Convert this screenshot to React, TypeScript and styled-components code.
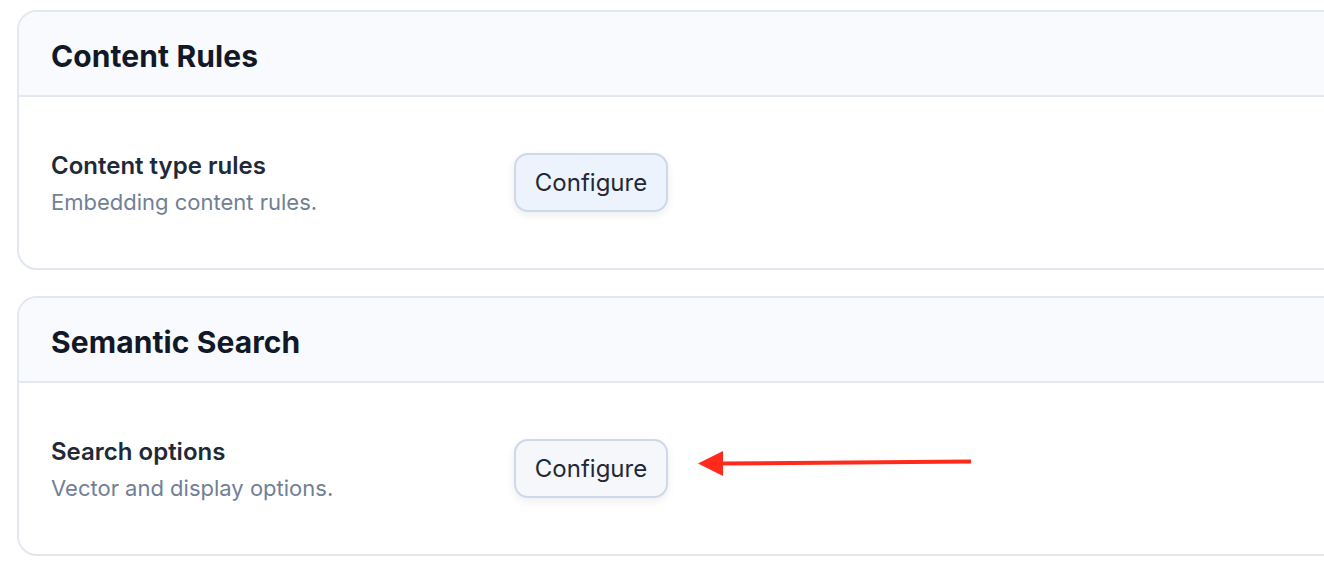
import styled, { createGlobalStyle } from 'styled-components';

const GlobalStyle = createGlobalStyle`
  html, body {
    margin: 0;
    padding: 0;
    background: #ffffff;
    font-family: Inter, "Noto Sans", "Liberation Sans", sans-serif;
    -webkit-font-smoothing: antialiased;
  }
`;

const sections = [
  {
    title: 'Content Rules',
    rows: [{ label: 'Content type rules', desc: 'Embedding content rules.', active: true }],
  },
  {
    title: 'Semantic Search',
    rows: [{ label: 'Search options', desc: 'Vector and display options.', active: false, pointer: true }],
  },
];

const App = () => {
  return (
    <>
      <GlobalStyle />
      <StyledPage>
        {sections.map((section) => (
          <StyledCard key={section.title}>
            <div className='card-header'>
              <h2>{section.title}</h2>
            </div>
            {section.rows.map((row) => (
              <StyledRow key={row.label}>
                <div className='row-text'>
                  <div className='row-label'>{row.label}</div>
                  <div className='row-desc'>{row.desc}</div>
                </div>
                <ConfigureButton $active={row.active}>Configure</ConfigureButton>
                {row.pointer && (
                  <svg className='pointer' width='274' height='40' viewBox='0 0 274 40'>
                    <line x1='22' y1='14.5' x2='273' y2='12.5' stroke='#ff2a1a' strokeWidth='4' />
                    <polygon points='0,14.5 25,2 25,27' fill='#ff2a1a' />
                  </svg>
                )}
              </StyledRow>
            ))}
          </StyledCard>
        ))}
      </StyledPage>
    </>
  );
};

const StyledPage = styled.div`
  display: flex;
  flex-direction: column;
  gap: 26px;
  padding: 10px 0 0 17px;
  width: 1400px;
  overflow: hidden;
`;

const StyledCard = styled.section`
  border: 2px solid #e3e7f0;
  border-radius: 20px;
  overflow: hidden;
  background: #ffffff;

  .card-header {
    height: 85px;
    display: flex;
    align-items: center;
    padding: 4px 32px 0;
    box-sizing: border-box;
    background: #f8fafd;
    border-bottom: 2px solid #e3e7f1;

    h2 {
      margin: 0;
      font-size: 30px;
      font-weight: 700;
      color: #111827;
      letter-spacing: 0.1px;
    }
  }
`;

const StyledRow = styled.div`
  height: 171px;
  display: flex;
  align-items: center;
  padding: 0 32px;

  .row-text {
    width: 463px;
    display: flex;
    flex-direction: column;
    gap: 9px;
    padding-top: 2px;
  }

  .row-label {
    font-size: 24px;
    font-weight: 600;
    color: #1f2937;
    line-height: 29px;
  }

  .row-desc {
    font-size: 22px;
    color: #718096;
    line-height: 27px;
  }

  .pointer {
    margin-left: 30px;
  }
`;

const ConfigureButton = styled.button<{ $active?: boolean }>`
  height: 59px;
  width: 154px;
  padding: 0;
  border-radius: 14px;
  border: 2px solid #cdd8e8;
  background: ${(p) => (p.$active ? '#edf3fc' : '#f5f7fb')};
  box-shadow: 0 3px 8px rgba(15, 23, 42, 0.08);
  font-family: inherit;
  font-size: 24px;
  color: #1f2937;
  cursor: pointer;
`;

export default App;
